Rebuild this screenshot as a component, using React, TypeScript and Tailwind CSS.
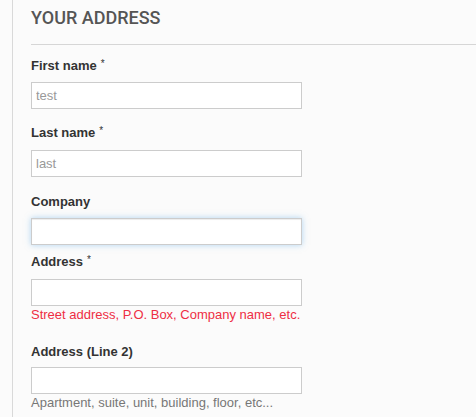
import React from 'react';

const labelCls = "block text-[13px] leading-[18px] font-bold text-[#333]";
const inputCls = "block w-[271px] h-[27px] border border-[#ccc] bg-white px-[4px] text-[13px] text-[#999] outline-none";

const Req: React.FC = () => (
  <sup className="ml-[4px] text-[10px] font-normal text-[#333] relative top-[-3px]">*</sup>
);

const App: React.FC = () => {
  return (
    <div className="min-h-screen bg-[#fbfbfb] pl-[12px]" style={{ fontFamily: '"Liberation Sans", Arial, sans-serif' }}>
      <div className="min-h-screen border-l border-[#d9d9d9] pl-[18px]">
        {/* Heading */}
        <h2
          className="pt-[5px] text-[18px] leading-[26px] font-medium uppercase text-[#555]"
          style={{ fontFamily: 'Roboto, "Open Sans", sans-serif' }}
        >
          Your address
        </h2>
        <div className="mt-[13px] h-px bg-[#d6d6d6]" />

        {/* First name */}
        <div className="mt-[12px]">
          <label className={labelCls}>
            First name<Req />
          </label>
          <input className={`${inputCls} mt-[7px]`} defaultValue="test" />
        </div>

        {/* Last name */}
        <div className="mt-[15px]">
          <label className={labelCls}>
            Last name<Req />
          </label>
          <input className={`${inputCls} mt-[8px]`} defaultValue="last" />
        </div>

        {/* Company */}
        <div className="mt-[16px]">
          <label className={labelCls}>Company</label>
          <input
            className={`${inputCls} mt-[7px] border-[#66afe9] shadow-[inset_0_1px_1px_rgba(0,0,0,0.075),0_0_6px_rgba(102,175,233,0.5)]`}
          />
        </div>

        {/* Address */}
        <div className="mt-[8px]">
          <label className={labelCls}>
            Address<Req />
          </label>
          <input className={`${inputCls} mt-[8px]`} />
          <p className="text-[13px] leading-[18px] text-[#ee2e44]">
            Street address, P.O. Box, Company name, etc.
          </p>
        </div>

        {/* Address line 2 */}
        <div className="mt-[19px]">
          <label className={labelCls}>Address (Line 2)</label>
          <input className={`${inputCls} mt-[6px]`} />
          <p className="text-[13px] leading-[18px] text-[#777]">
            Apartment, suite, unit, building, floor, etc...
          </p>
        </div>
      </div>
    </div>
  );
};

export default App;
